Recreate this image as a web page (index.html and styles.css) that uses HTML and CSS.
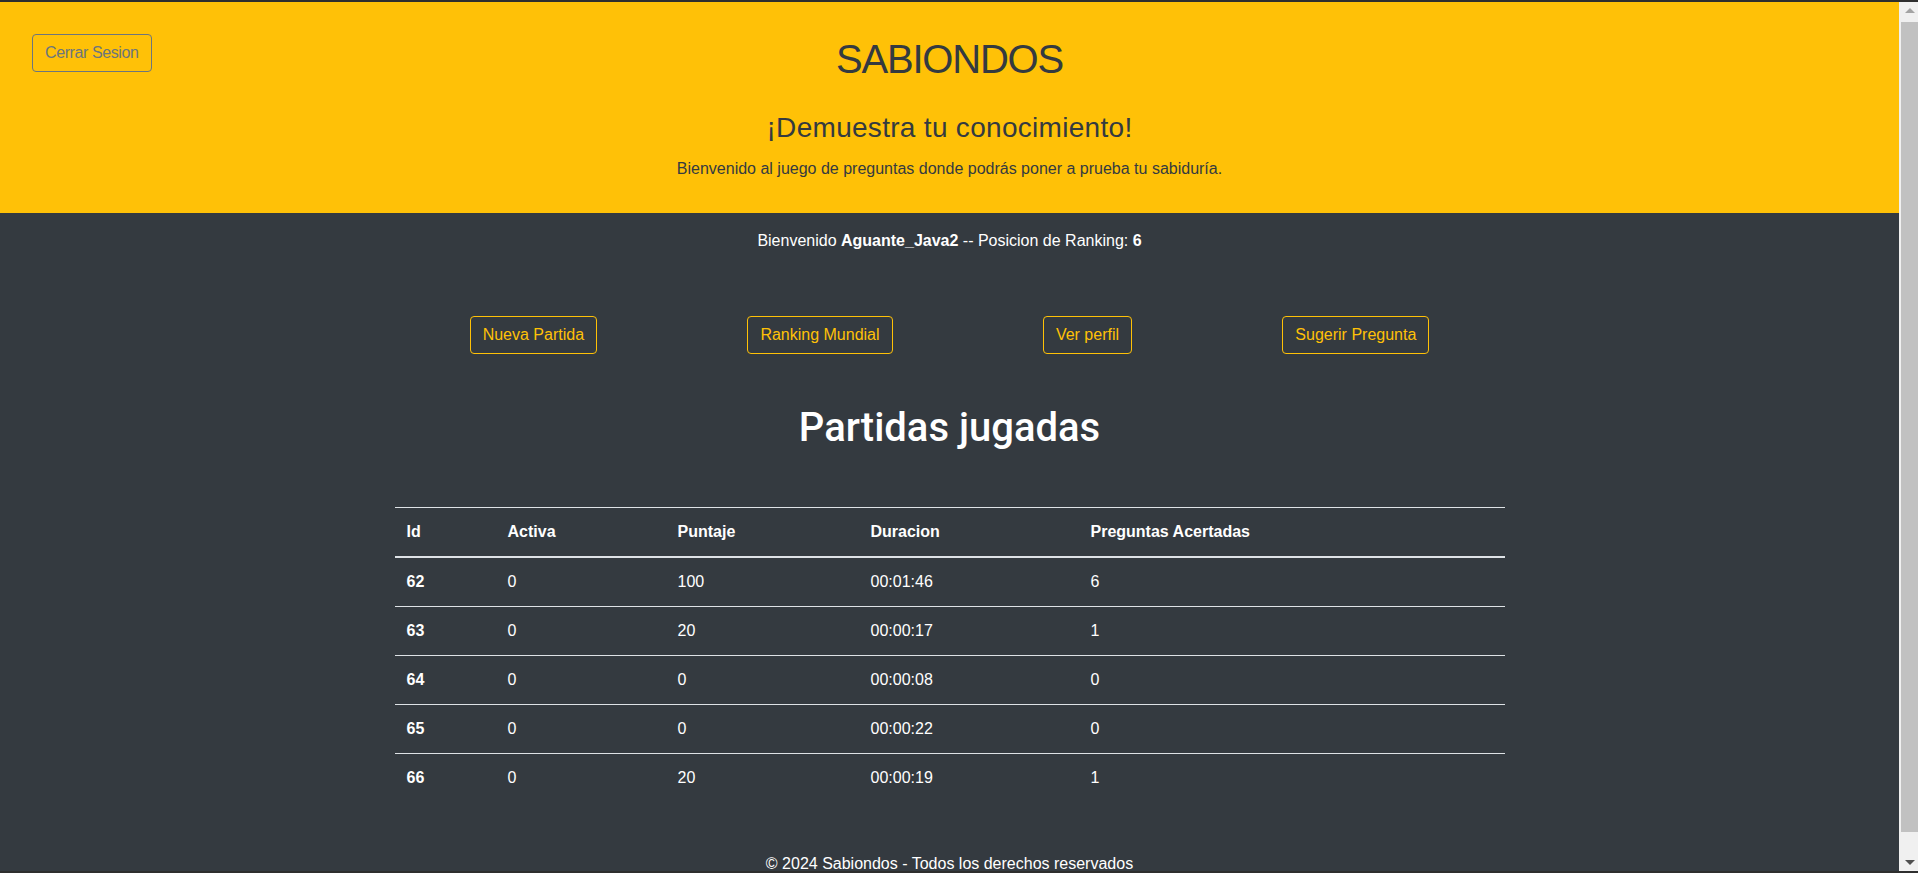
FILE: index.html
```html
<!DOCTYPE html>
<html lang="es">
<head>
<meta charset="utf-8">
<title>Sabiondos</title>
<link rel="stylesheet" href="styles.css">
</head>
<body>
<div class="frame-edge"></div>
<div class="window">
  <div class="page">
    <header class="hero">
      <div class="hero-top">
        <a class="btn btn-outline-secondary" href="#">Cerrar Sesion</a>
        <h1 class="brand">SABIONDOS</h1>
        <span class="hero-spacer"></span>
      </div>
      <h3 class="tagline">¡Demuestra tu conocimiento!</h3>
      <p class="intro">Bienvenido al juego de preguntas donde podrás poner a prueba tu sabiduría.</p>
    </header>
    <main class="main">
      <p class="welcome">Bienvenido <strong>Aguante_Java2</strong> -- Posicion de Ranking: <strong>6</strong></p>
      <nav class="actions container">
        <a class="btn btn-outline-warning" href="#">Nueva Partida</a>
        <a class="btn btn-outline-warning" href="#">Ranking Mundial</a>
        <a class="btn btn-outline-warning" href="#">Ver perfil</a>
        <a class="btn btn-outline-warning" href="#">Sugerir Pregunta</a>
      </nav>
      <h2 class="section-title">Partidas jugadas</h2>
      <div class="container">
        <table class="games">
          <thead>
            <tr>
              <th class="c-id">Id</th>
              <th class="c-activa">Activa</th>
              <th class="c-puntaje">Puntaje</th>
              <th class="c-duracion">Duracion</th>
              <th>Preguntas Acertadas</th>
            </tr>
          </thead>
          <tbody>
            <tr><th>62</th><td>0</td><td>100</td><td>00:01:46</td><td>6</td></tr>
            <tr><th>63</th><td>0</td><td>20</td><td>00:00:17</td><td>1</td></tr>
            <tr><th>64</th><td>0</td><td>0</td><td>00:00:08</td><td>0</td></tr>
            <tr><th>65</th><td>0</td><td>0</td><td>00:00:22</td><td>0</td></tr>
            <tr><th>66</th><td>0</td><td>20</td><td>00:00:19</td><td>1</td></tr>
          </tbody>
        </table>
      </div>
    </main>
    <footer class="footer">© 2024 Sabiondos - Todos los derechos reservados</footer>
  </div>
  <div class="scrollbar">
    <div class="sb-btn"><span class="arrow-up"></span></div>
    <div class="sb-track"><div class="sb-thumb"></div></div>
    <div class="sb-btn"><span class="arrow-down"></span></div>
  </div>
</div>
<div class="frame-edge"></div>
</body>
</html>
```
FILE: styles.css
```css
html {
  overflow: hidden;
}

body {
  margin: 0;
  height: 873px;
  display: flex;
  flex-direction: column;
  overflow: hidden;
  font-family: "Liberation Sans", Arial, sans-serif;
  font-size: 16px;
  line-height: 1.5;
  color: #ffffff;
  background: #343a40;
}

.frame-edge {
  height: 2px;
  flex: none;
  background: #2e2e2e;
}

.window {
  flex: 1;
  display: flex;
  min-height: 0;
}

.page {
  flex: 1;
  min-width: 0;
  overflow: hidden;
  background: #343a40;
}

/* ---------- hero ---------- */
.hero {
  background: #ffc107;
  color: #343a40;
  padding: 32px 32px 32px;
  text-align: center;
}

.hero-top {
  display: grid;
  grid-template-columns: 1fr auto 1fr;
  align-items: start;
}

.hero-top .btn {
  justify-self: start;
  letter-spacing: -0.4px;
}

.brand {
  margin: 1px 0 0;
  font-size: 40px;
  font-weight: 400;
  line-height: 1.2;
  letter-spacing: -1.2px;
}

.tagline {
  margin: 28px 0 0;
  font-size: 28px;
  font-weight: 500;
  line-height: 1.2;
  letter-spacing: 0.3px;
}

.intro {
  margin: 12px 0 0;
  font-size: 16px;
  line-height: 24px;
}

/* ---------- buttons ---------- */
.btn {
  display: inline-block;
  padding: 6px 12px;
  font-size: 16px;
  line-height: 24px;
  border: 1px solid transparent;
  border-radius: 4px;
  text-decoration: none;
  background: transparent;
  white-space: nowrap;
}

.btn-outline-secondary {
  color: #6c757d;
  border-color: #6c757d;
}

.btn-outline-warning {
  color: #ffc107;
  border-color: #ffc107;
}

/* ---------- main ---------- */
.main {
  padding-top: 16px;
}

.welcome {
  margin: 0;
  text-align: center;
}

.welcome strong {
  font-weight: 700;
}

.container {
  width: 1110px;
  margin: 0 auto;
}

.actions {
  display: flex;
  justify-content: space-around;
  margin-top: 63px;
}

.section-title {
  margin: 50px 0 0;
  text-align: center;
  font-family: Roboto, "Liberation Sans", sans-serif;
  font-size: 40px;
  font-weight: 500;
  line-height: 1.2;
  color: #ffffff;
}

.section-title + .container {
  margin-top: 55px;
}

/* ---------- table ---------- */
.games {
  width: 100%;
  border-collapse: collapse;
  table-layout: fixed;
  color: #ffffff;
}

.games th,
.games td {
  padding: 12px;
  text-align: left;
  vertical-align: top;
  border-top: 1px solid #dee2e6;
  line-height: 24px;
}

.games th {
  font-weight: 700;
}

.games td {
  font-weight: 400;
}

.games thead th {
  border-bottom: 2px solid #dee2e6;
}

.c-id { width: 77px; }
.c-activa { width: 146px; }
.c-puntaje { width: 169px; }
.c-duracion { width: 196px; }

/* ---------- footer ---------- */
.footer {
  margin-top: 50px;
  text-align: center;
  padding-bottom: 16px;
}

/* ---------- fake scrollbar ---------- */
.scrollbar {
  width: 19px;
  flex: none;
  display: flex;
  flex-direction: column;
  background: #f0f0f0;
}

.sb-btn {
  height: 17px;
  flex: none;
  display: flex;
  align-items: center;
  justify-content: center;
  padding-left: 2px;
}

.arrow-up {
  width: 0;
  height: 0;
  border-left: 5px solid transparent;
  border-right: 5px solid transparent;
  border-bottom: 5px solid #a3a3a3;
}

.arrow-down {
  width: 0;
  height: 0;
  border-left: 5px solid transparent;
  border-right: 5px solid transparent;
  border-top: 5px solid #505050;
}

.sb-track {
  flex: 1;
  padding-top: 3px;
}

.sb-thumb {
  height: 810px;
  margin-left: 2px;
  background: #c1c1c1;
}
```
